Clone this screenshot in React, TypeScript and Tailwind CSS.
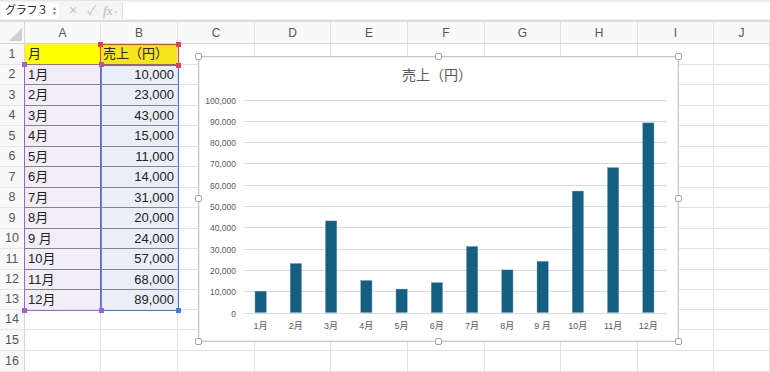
import React from 'react';

type Col = { name: string; w: string };

const cols: Col[] = [
  { name: 'A', w: 'w-[76px]' },
  { name: 'B', w: 'w-[77px]' },
  { name: 'C', w: 'w-[77px]' },
  { name: 'D', w: 'w-[76px]' },
  { name: 'E', w: 'w-[77px]' },
  { name: 'F', w: 'w-[77px]' },
  { name: 'G', w: 'w-[76px]' },
  { name: 'H', w: 'w-[77px]' },
  { name: 'I', w: 'w-[76px]' },
  { name: 'J', w: 'flex-1' },
];

const rowH = [
  'h-[21px]', 'h-[20px]', 'h-[21px]', 'h-[20px]', 'h-[21px]', 'h-[20px]', 'h-[21px]', 'h-[20px]',
  'h-[21px]', 'h-[20px]', 'h-[21px]', 'h-[20px]', 'h-[20px]', 'h-[20px]', 'h-[21px]', 'h-[21px]',
];

const data: [string, number][] = [
  ['1月', 10000],
  ['2月', 23000],
  ['3月', 43000],
  ['4月', 15000],
  ['5月', 11000],
  ['6月', 14000],
  ['7月', 31000],
  ['8月', 20000],
  ['9 月', 24000],
  ['10月', 57000],
  ['11月', 68000],
  ['12月', 89000],
];

const fmt = (n: number) => n.toLocaleString('en-US');

// small square marker sitting on a corner of a range highlight
const Dot = ({ color, pos }: { color: string; pos: string }) => (
  <div className={`absolute h-[5px] w-[5px] ${color} ${pos}`} />
);

// resize handle on the chart frame
const Handle = ({ pos }: { pos: string }) => (
  <div className={`absolute h-[7px] w-[7px] rounded-[2px] border border-[#a6a6a6] bg-white ${pos}`} />
);

const Chart = () => {
  const left = 45;
  const right = 468;
  const zeroY = 256.5;
  const step = 21.3;
  const cw = (right - left) / 12;
  const ticks = [0, 1, 2, 3, 4, 5, 6, 7, 8, 9, 10];
  return (
    <svg width="479" height="284" className="block">
      <text x="238" y="23" textAnchor="middle" fontSize="14" fill="#595959" fontFamily="'Noto Sans CJK JP', sans-serif">
        売上（円）
      </text>
      {ticks.map((t) => {
        const y = Math.round(zeroY - t * step) - 0.5;
        return (
          <g key={t}>
            <line x1={left} x2={right} y1={y} y2={y} stroke="#d9d9d9" strokeWidth="1" />
            <text x="37" y={y + 3} textAnchor="end" fontSize="8.5" fill="#595959" fontFamily="'Liberation Sans', sans-serif">
              {fmt(t * 10000)}
            </text>
          </g>
        );
      })}
      {data.map(([m, v], i) => {
        const cx = left - 1 + cw * (i + 0.5);
        const h = (v / 100000) * step * 10;
        return (
          <g key={m}>
            <rect x={cx - 5.6} y={zeroY - 1 - h} width="11.2" height={h} fill="#156082" stroke="#5f93ad" strokeWidth="0.4" />
            <text x={cx} y="272" textAnchor="middle" fontSize="9" fill="#595959" fontFamily="'Liberation Sans', 'Noto Sans CJK JP', sans-serif">
              {m}
            </text>
          </g>
        );
      })}
    </svg>
  );
};

const Cell = ({ row, ci }: { row: number; ci: number }) => {
  const col = cols[ci];
  let cls = `${col.w} flex shrink-0 items-center border-r border-b border-[#e1e1e1] text-[13px] text-[#222]`;
  let content: React.ReactNode = null;
  if (ci === 0 && row === 1) {
    cls += ' bg-[#ffff00] pl-[3px]';
    content = '月';
  } else if (ci === 1 && row === 1) {
    cls += ' bg-[#f6e51c] pl-[2px]';
    content = '売上（円）';
  } else if (row >= 2 && row <= 13 && ci <= 1) {
    const [m, v] = data[row - 2];
    cls += ci === 0 ? ' bg-[#f2eef8] pl-[3px]' : ' bg-[#e9eef9] justify-end pr-[3px]';
    if (row < 13) cls += ' border-b-[#858585]';
    content = ci === 0 ? m : fmt(v);
  }
  return <div className={cls}>{content}</div>;
};

const App = () => {
  const rows = Array.from({ length: 16 }, (_, i) => i + 1);
  return (
    <div className="h-[372px] w-[770px] overflow-hidden bg-white font-['Liberation_Sans','Noto_Sans_CJK_JP',sans-serif]">
      {/* formula bar */}
      <div className="flex h-[20px] items-center border-t border-[#e6e6e6] bg-[#f5f5f5]">
        <div className="ml-[1px] flex h-[16px] w-[58px] items-center justify-between bg-white pl-[4px] pr-[2px]">
          <span className="text-[11px] tracking-[-0.3px] text-[#222]">グラフ３</span>
          <span className="flex flex-col text-[5px] leading-[5px] text-[#777]">
            <span>▲</span>
            <span>▼</span>
          </span>
        </div>
        <span className="ml-[10px] text-[14px] text-[#c4c4c4]">×</span>
        <span className="ml-[10px] text-[13px] text-[#c4c4c4]">✓</span>
        <span className="ml-[7px] font-['Liberation_Serif',serif] text-[13px] italic text-[#b8b8b8]">fx</span>
        <span className="ml-[1px] mt-[2px] text-[7px] text-[#b8b8b8]">⌄</span>
        <div className="ml-[3px] h-[16px] flex-1 border-l border-[#dddddd] bg-white" />
      </div>
      <div className="h-[2px] bg-[#dcdcdc]" />

      {/* sheet */}
      <div className="relative">
        <div className="flex h-[22px] border-b border-[#d6d6d6] bg-[#f9f9f9]">
          <div className="flex w-[25px] shrink-0 items-end justify-end border-r border-[#d6d6d6] p-[2px]">
            <div className="h-0 w-0 border-b-[13px] border-l-[13px] border-b-[#d0d0d0] border-l-transparent" />
          </div>
          {cols.map((c) => (
            <div key={c.name} className={`${c.w} flex shrink-0 items-center justify-center border-r border-[#e1e1e1] text-[12px] text-[#555]`}>
              {c.name}
            </div>
          ))}
        </div>
        {rows.map((r) => (
          <div key={r} className={`flex ${rowH[r - 1]}`}>
            <div className="flex w-[25px] shrink-0 items-center justify-center border-r border-b border-r-[#d6d6d6] border-b-[#e6e6e6] bg-[#f9f9f9] text-[12.5px] text-[#555]">
              {r}
            </div>
            {cols.map((c, ci) => (
              <Cell key={c.name} row={r} ci={ci} />
            ))}
          </div>
        ))}

        {/* data range highlights drawn over the cells */}
        <div className="absolute left-[100px] top-[42px] h-[247px] w-[79px] border border-[#3d7fe0]">
          <Dot color="bg-[#3d7fe0]" pos="-bottom-[3px] -right-[3px]" />
        </div>
        <div className="absolute left-[24px] top-[42px] h-[247px] w-[78px] border border-[#9b66d2]">
          <Dot color="bg-[#9b66d2]" pos="-left-[3px] -top-[3px]" />
          <Dot color="bg-[#9b66d2]" pos="-right-[3px] -top-[3px]" />
          <Dot color="bg-[#9b66d2]" pos="-bottom-[3px] -left-[3px]" />
          <Dot color="bg-[#9b66d2]" pos="-bottom-[3px] -right-[3px]" />
        </div>
        <div className="absolute left-[100px] top-[22px] h-[22px] w-[79px] border border-[#e0404f]">
          <Dot color="bg-[#e0404f]" pos="-left-[3px] -top-[3px]" />
          <Dot color="bg-[#e0404f]" pos="-right-[3px] -top-[3px]" />
          <Dot color="bg-[#e0404f]" pos="-bottom-[3px] -right-[3px]" />
        </div>

        {/* chart object floating over the grid */}
        <div className="absolute left-[198px] top-[34px] h-[286px] w-[481px] border border-[#c8c8c8] bg-white shadow-[inset_0_0_0_1px_#ececec]">
          <Chart />
          <Handle pos="-left-[4px] -top-[4px]" />
          <Handle pos="left-[236px] -top-[4px]" />
          <Handle pos="-right-[4px] -top-[4px]" />
          <Handle pos="-left-[4px] top-[138px]" />
          <Handle pos="-right-[4px] top-[138px]" />
          <Handle pos="-bottom-[4px] -left-[4px]" />
          <Handle pos="-bottom-[4px] left-[236px]" />
          <Handle pos="-bottom-[4px] -right-[4px]" />
        </div>
      </div>
    </div>
  );
};

export default App;
